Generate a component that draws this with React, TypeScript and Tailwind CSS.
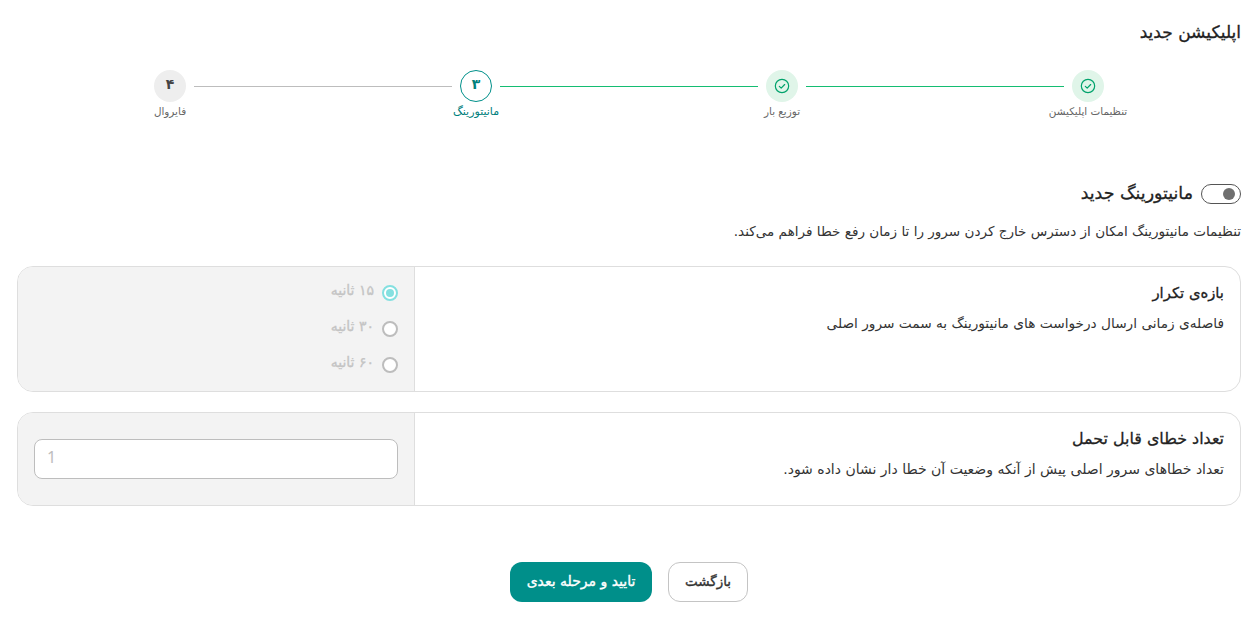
import React from "react";

function Check() {
  return (
    <svg width="16" height="16" viewBox="0 0 24 24" fill="none" stroke="#00a36c" strokeWidth="1.8" strokeLinecap="round" strokeLinejoin="round">
      <circle cx="12" cy="12" r="10" />
      <path d="M8 12.5l2.8 2.8L16 9.8" />
    </svg>
  );
}

function Step({ label, state, n }: { label: string; state: "done" | "active" | "todo"; n?: string }) {
  return (
    <div className="flex w-8 shrink-0 flex-col items-center">
      {state === "done" && (
        <div className="flex h-8 w-8 items-center justify-center rounded-full bg-[#e0f5e9]"><Check /></div>
      )}
      {state === "active" && (
        <div className="flex h-8 w-8 items-center justify-center rounded-full border border-[#00908a] pb-[3px] text-[14px] font-bold text-[#00807c]">{n}</div>
      )}
      {state === "todo" && (
        <div className="flex h-8 w-8 items-center justify-center rounded-full bg-[#eeeeee] pb-[3px] text-[14px] font-bold text-[#444]">{n}</div>
      )}
      <span className={`whitespace-nowrap leading-[14px] ${state === "active" ? "mt-[3px] text-[11px] text-[#00807c]" : "mt-[2px] text-[10.4px] text-[#666]"}`}>{label}</span>
    </div>
  );
}

function Radio({ label, checked }: { label: string; checked?: boolean }) {
  return (
    <div className="flex h-4 items-center gap-2">
      <span className={`flex h-4 w-4 items-center justify-center rounded-full border-2 bg-white ${checked ? "border-[#84e0e0]" : "border-[#bdbdbd]"}`}>
        {checked && <span className="h-2 w-2 rounded-full bg-[#84e0e0]" />}
      </span>
      <span className="pb-[7px] text-[14px] leading-4 text-[#c4c4c4] [-webkit-text-stroke:0.3px_#c4c4c4]">{label}</span>
    </div>
  );
}

export default function App() {
  return (
    <div dir="rtl" className="h-[620px] w-[1259px] overflow-hidden bg-white pl-[17px] pr-[18px] font-['DejaVu_Sans','Noto_Sans',sans-serif] text-[#2b2b2b]">
      <h1 className="pt-[21px] text-[17px] leading-[22px] text-[#222] [-webkit-text-stroke:0.3px_#222]">اپلیکیشن جدید</h1>

      <div className="mt-[27px] flex items-start px-[137px]">
        <Step label="تنظیمات اپلیکیشن" state="done" />
        <div className="mx-2 mt-[16px] h-px flex-1 bg-[#14bd72]" />
        <Step label="توزیع بار" state="done" />
        <div className="mx-2 mt-[16px] h-px flex-1 bg-[#14bd72]" />
        <Step label="مانیتورینگ" state="active" n="۳" />
        <div className="mx-2 mt-[16px] h-px flex-1 bg-[#bdbdbd]" />
        <Step label="فایروال" state="todo" n="۴" />
      </div>

      <div className="mt-[65px] flex h-5 items-center gap-2">
        <div className="flex h-5 w-10 items-center justify-start rounded-full border border-[#555] bg-white pr-[5px]">
          <span className="h-3 w-3 rounded-full bg-[#6f6f6f]" />
        </div>
        <span className="pb-[3px] text-[17.4px] leading-5 text-[#222] [-webkit-text-stroke:0.3px_#222]">مانیتورینگ جدید</span>
      </div>

      <p className="mt-[17px] text-[13.55px] leading-[20px] text-[#333]">تنظیمات مانیتورینگ امکان از دسترس خارج کردن سرور را تا زمان رفع خطا فراهم می‌کند.</p>

      <div className="mt-[25px] flex h-[126px] overflow-hidden rounded-2xl border border-[#dedede]">
        <div className="flex-1 p-4 pt-[15px]">
          <h2 className="text-[14.8px] leading-[22px] text-[#222] [-webkit-text-stroke:0.3px_#222]">بازه‌ی تکرار</h2>
          <p className="mt-[9px] text-[13.7px] leading-[20px] text-[#333]">فاصله‌ی زمانی ارسال درخواست های مانیتورینگ به سمت سرور اصلی</p>
        </div>
        <div className="flex w-[397px] flex-col gap-5 border-r border-[#dedede] bg-[#f3f3f3] px-4 pt-[18px]">
          <Radio label="۱۵ ثانیه" checked />
          <Radio label="۳۰ ثانیه" />
          <Radio label="۶۰ ثانیه" />
        </div>
      </div>

      <div className="mt-[20px] flex h-[94px] overflow-hidden rounded-2xl border border-[#dedede]">
        <div className="flex-1 p-4 pt-[15px]">
          <h2 className="text-[15.9px] leading-[22px] text-[#222] [-webkit-text-stroke:0.3px_#222]">تعداد خطای قابل تحمل</h2>
          <p className="mt-[9px] text-[14px] leading-[20px] text-[#333]">تعداد خطاهای سرور اصلی پیش از آنکه وضعیت آن خطا دار نشان داده شود.</p>
        </div>
        <div className="flex w-[397px] items-center border-r border-[#dedede] bg-[#f3f3f3] px-4">
          <div dir="ltr" className="flex h-10 w-full items-center rounded-lg border border-[#bdbdbd] bg-white px-3 pb-[5px] font-['Noto_Sans',sans-serif] text-[16px] text-[#bdbdbd]">1</div>
        </div>
      </div>

      <div className="mt-[56px] flex justify-center gap-4">
        <button className="h-10 w-20 rounded-xl border border-[#c4c4c4] bg-white pb-[2px] text-[13.5px] text-[#333] [-webkit-text-stroke:0.35px_#333]">بازگشت</button>
        <button className="h-10 w-[142px] rounded-xl bg-[#008f8a] pb-[2px] text-[14px] text-white [-webkit-text-stroke:0.35px_#fff]">تایید و مرحله بعدی</button>
      </div>
    </div>
  );
}
